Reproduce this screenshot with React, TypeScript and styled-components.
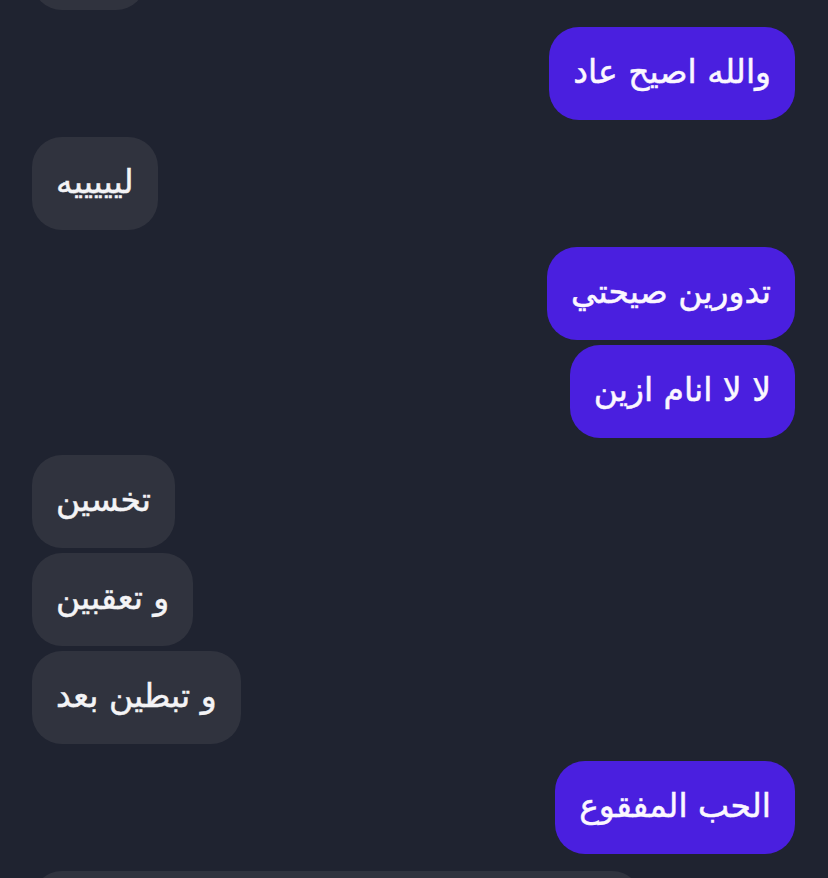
import styled, { createGlobalStyle } from 'styled-components';

type Msg = { id: number; text: string; mine: boolean };

const messages: Msg[] = [
  { id: 0, text: 'هههه', mine: false },
  { id: 1, text: 'والله اصيح عاد', mine: true },
  { id: 2, text: 'ليييييه', mine: false },
  { id: 3, text: 'تدورين صيحتي', mine: true },
  { id: 4, text: 'لا لا انام ازين', mine: true },
  { id: 5, text: 'تخسين', mine: false },
  { id: 6, text: 'و تعقبين', mine: false },
  { id: 7, text: 'و تبطين بعد', mine: false },
  { id: 8, text: 'الحب المفقوع', mine: true },
  { id: 9, text: 'ماعليك منهم خليهم يحبون بعض ويتركونك', mine: false },
];

export default function App() {
  return (
    <>
      <GlobalStyle />
      <Chat>
        <List>
          {messages.map((m, i) => {
            const prev = messages[i - 1];
            const grouped = prev !== undefined && prev.mine === m.mine;
            return (
              <Row key={m.id} $mine={m.mine} $grouped={grouped}>
                <Bubble $mine={m.mine} dir="rtl">
                  {m.text}
                </Bubble>
              </Row>
            );
          })}
        </List>
      </Chat>
    </>
  );
}

const GlobalStyle = createGlobalStyle`
  html, body {
    margin: 0;
    padding: 0;
    background: #1f2330;
    overflow: hidden;
  }
`;

const Chat = styled.div`
  width: 828px;
  height: 878px;
  overflow: hidden;
  background: #1f2330;
  font-family: 'DejaVu Sans', 'Noto Sans', sans-serif;
`;

const List = styled.div`
  display: flex;
  flex-direction: column;
  padding: 0 33px 0 32px;
  margin-top: -83px;
`;

const Row = styled.div<{ $mine: boolean; $grouped: boolean }>`
  display: flex;
  justify-content: ${(p) => (p.$mine ? 'flex-end' : 'flex-start')};
  margin-top: ${(p) => (p.$grouped ? '5px' : '17px')};

  &:first-child {
    margin-top: 0;
  }
`;

const Bubble = styled.div<{ $mine: boolean }>`
  box-sizing: border-box;
  height: 93px;
  display: flex;
  align-items: center;
  padding: 0 24px 4px;
  border-radius: 30px;
  font-size: 33px;
  white-space: nowrap;
  -webkit-text-stroke: 0.5px currentColor;
  background: ${(p) => (p.$mine ? '#4a1fdf' : '#30333e')};
  color: ${(p) => (p.$mine ? '#fbf7ff' : '#f4f4f6')};
`;
